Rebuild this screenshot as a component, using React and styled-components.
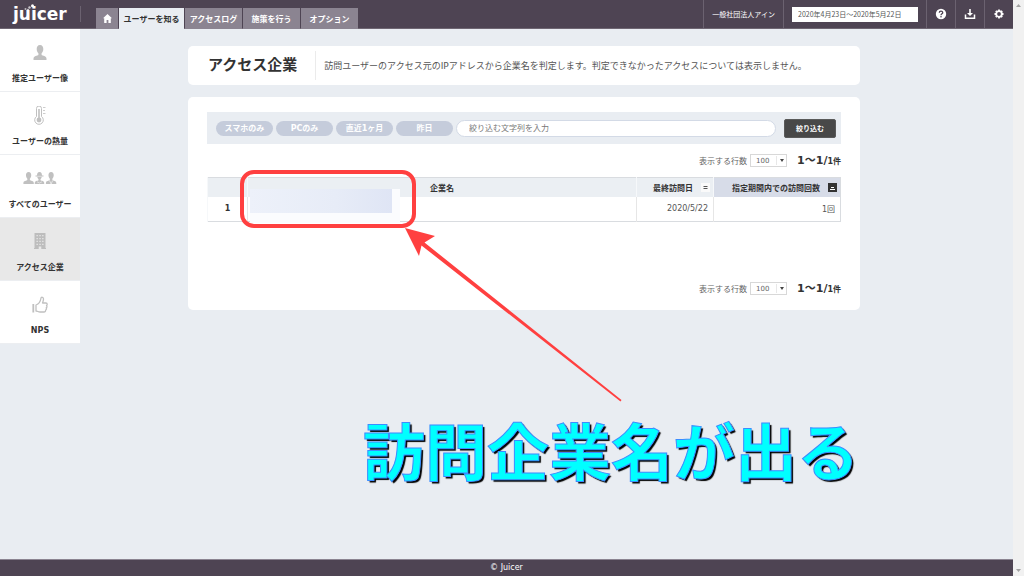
import React from 'react';
import styled, { createGlobalStyle } from 'styled-components';

const GlobalStyle = createGlobalStyle`
  * {
    box-sizing: border-box;
  }
  body {
    margin: 0;
    background: #e9edf2;
    color: #333;
    font-family: 'DejaVu Sans', 'Noto Sans CJK JP', sans-serif;
    font-size: 8px;
  }
  button, input, select {
    font-family: inherit;
    margin: 0;
  }
  a {
    color: inherit;
    text-decoration: none;
  }
`;

const Window = styled.div`
  display: flex;
  min-height: 100vh;
`;

const Page = styled.div`
  flex: 1;
  min-width: 0;
  display: flex;
  flex-direction: column;
`;

const ScrollTrack = styled.div`
  width: 11px;
  background: #f1f1f1;
  display: flex;
  flex-direction: column;
  justify-content: space-between;
  align-items: center;
  padding: 4px 0;

  svg {
    display: block;
    width: 5px;
    height: 3px;
    fill: #a3a3a3;
  }
`;

const Header = styled.header`
  display: flex;
  height: 29px;
  background: #4e4453;
  border-bottom: 1px solid #6e6672;
  color: #fff;
`;

const Logo = styled.a`
  position: relative;
  width: 80px;
  padding-left: 13px;
  font-size: 17px;
  font-weight: bold;
  line-height: 29px;

  svg {
    position: absolute;
    left: 24px;
    top: 4px;
    width: 14px;
    height: 8px;
    fill: #fff;
  }
`;

const LogoRule = styled.span`
  width: 1px;
  height: 16px;
  margin-top: 6px;
  background: #6b6270;
`;

const Nav = styled.nav`
  display: flex;
  align-items: flex-end;
  gap: 1px;
  margin-left: 15px;
  margin-bottom: -1px;
`;

const Tab = styled.a`
  display: flex;
  align-items: center;
  justify-content: center;
  width: ${(p) => p.$width || 57}px;
  height: 21px;
  background: ${(p) => (p.$active ? '#e9edf2' : '#8b8491')};
  color: ${(p) => (p.$active ? '#333' : '#fff')};
  font-weight: bold;
  white-space: nowrap;

  svg {
    display: block;
    width: 9px;
    height: 9px;
    fill: #fff;
  }
`;

const Tools = styled.div`
  display: flex;
  margin-left: auto;
`;

const Tool = styled.div`
  display: flex;
  align-items: center;
  padding: 0 8px;
  border-left: 1px solid #6b6270;
  font-size: 7px;
  white-space: nowrap;
`;

const DateInput = styled.input`
  width: 126px;
  height: 15px;
  padding: 0 6px;
  border: 0;
  background: #fff;
  color: #555;
  font-family: 'Noto Sans CJK JP', sans-serif;
  font-size: 7px;
`;

const ToolButton = styled.button`
  display: flex;
  align-items: center;
  justify-content: center;
  width: 29px;
  padding: 0;
  border: 0;
  border-left: 1px solid #6b6270;
  background: none;

  svg {
    display: block;
    width: 12px;
    height: 12px;
  }
`;

const Body = styled.div`
  display: flex;
  flex: 1;
  align-items: flex-start;
`;

const Sidebar = styled.nav`
  width: 80px;
  flex-shrink: 0;
  background: #fff;
`;

const SideLink = styled.a`
  display: flex;
  flex-direction: column;
  align-items: center;
  height: 63px;
  padding-top: 14px;
  border-bottom: 1px solid #eceef1;
  background: ${(p) => (p.$active ? '#e8e8e8' : '#fff')};
  font-weight: bold;
  line-height: 12px;
  white-space: nowrap;

  svg {
    display: block;
    height: 20px;
    margin-bottom: 10px;
  }
`;

const Main = styled.main`
  flex: 1;
  min-width: 0;
  margin: 17px 153px 0 108px;
`;

const Card = styled.section`
  background: #fff;
  border-radius: 5px;
`;

const TitleCard = styled(Card)`
  display: flex;
  align-items: center;
  height: 39px;
  margin-bottom: 12px;
  padding: 0 20px;
`;

const Title = styled.h1`
  margin: 0;
  padding-right: 18px;
  border-right: 1px solid #ebebeb;
  font-size: 15px;
  line-height: 29px;
  white-space: nowrap;
`;

const Lead = styled.p`
  margin: 0 0 0 8px;
  color: #555;
  font-size: 9px;
`;

const ListCard = styled(Card)`
  padding: 15px 19px;
`;

const Filter = styled.form`
  display: flex;
  align-items: center;
  gap: 3px;
  height: 32px;
  padding: 0 5px 0 9px;
  background: #e9edf2;
`;

const Pill = styled.button`
  width: 57px;
  height: 15px;
  padding: 0;
  border: 0;
  border-radius: 8px;
  background: #c5ccdb;
  color: #fff;
  font-size: 8px;
  font-weight: bold;
  line-height: 15px;
`;

const SearchInput = styled.input`
  flex: 1;
  min-width: 0;
  height: 17px;
  padding: 0 12px;
  border: 1px solid #d3dae6;
  border-radius: 9px;
  background: #fff;
  font-size: 8px;

  &::placeholder {
    color: #777;
    opacity: 1;
  }
`;

const SubmitButton = styled.button`
  width: 52px;
  height: 19px;
  margin-left: 5px;
  padding: 0;
  border: 1px solid #5a5a5a;
  border-radius: 2px;
  background: #484848;
  color: #fff;
  font-size: 7px;
  font-weight: bold;
`;

const PagerRow = styled.div`
  display: flex;
  align-items: center;
  justify-content: flex-end;
  height: 13px;
  margin-top: ${(p) => p.$top}px;
  color: #666;
`;

const SelectBox = styled.span`
  position: relative;
  display: flex;
  margin: 0 10px 0 3px;

  &::after {
    content: '';
    position: absolute;
    right: 3px;
    top: 5px;
    border: 2px solid transparent;
    border-top: 3px solid #444;
    border-bottom: 0;
  }
`;

const Select = styled.select`
  appearance: none;
  width: 37px;
  height: 13px;
  padding: 0 5px;
  border: 1px solid #d8d8d8;
  border-radius: 0;
  background: linear-gradient(#e8e8e8, #e8e8e8) 25px 1px / 1px 9px no-repeat #fff;
  color: #666;
  font-size: 7px;
`;

const Range = styled.strong`
  color: #333;
  font-size: 11px;
  line-height: 13px;

  small {
    font-size: 8px;
  }
`;

const Table = styled.table`
  width: 100%;
  margin-top: 10px;
  border: 1px solid #d9dce0;
  border-collapse: collapse;
  table-layout: fixed;

  th {
    height: 19px;
    padding: 0;
    background: #ebeff3;
    border-left: 1px solid #f6f8fa;
    text-align: center;
  }

  td {
    height: 25px;
    padding: 0 5px;
    border-left: 1px solid #e6e6e6;
    color: #555;
    text-align: right;
  }
`;

const NumberCell = styled.th`
  && {
    height: 25px;
    background: #fff;
  }
`;

const SortHead = styled.th`
  && {
    background: ${(p) => (p.$sorted ? '#d7dce8' : '#ebeff3')};
  }
`;

const SortLabel = styled.span`
  display: flex;
  align-items: center;
  justify-content: flex-end;
  gap: 8px;
  padding-right: 3px;
  white-space: nowrap;
`;

const SortButton = styled.button`
  display: flex;
  padding: 0;
  border: 0;
  background: ${(p) => (p.$sorted ? '#333' : '#fafafa')};
  color: ${(p) => (p.$sorted ? '#fff' : '#555')};

  svg {
    display: block;
    width: 9px;
    height: 9px;
  }
`;

const Footer = styled.footer`
  height: 17px;
  border-top: 1px solid #8b8491;
  background: #4e4453;
  color: #fff;
  line-height: 16px;
  text-align: center;
`;

// notes drawn over the page
const Markup = styled.svg`
  position: absolute;
  left: 0;
  top: 0;
  width: 1024px;
  height: 576px;
  pointer-events: none;
`;

const Caption = styled.p`
  position: absolute;
  left: 363px;
  top: 404px;
  margin: 0;
  color: #00ffff;
  font-family: 'Noto Sans CJK JP', sans-serif;
  font-size: 62px;
  font-weight: bold;
  line-height: 90px;
  white-space: nowrap;
  -webkit-text-stroke: 1px #3c8cff;
  text-shadow: 2px 2px 1px #000;
  pointer-events: none;
`;

const UserShape = () => (
  <path d="M7 0C4.700 0 3.700 1.700 3.700 4C3.700 6 4.500 7.500 5.400 8.300V10C4.500 10.800 0.500 11 0.500 13.500V15H13.500V13.500C13.500 11 9.500 10.800 8.600 10V8.300C9.500 7.500 10.300 6 10.300 4C10.300 1.700 9.300 0 7 0Z" />
);

const UserIcon = () => (
  <svg width="14" viewBox="0 -2 14 20" fill="#c0c0c0"><UserShape /></svg>
);

const ThermoIcon = () => (
  <svg width="14" viewBox="0 1 14 20" fill="none" stroke="#c0c0c0">
    <path d="M3.500 11.500V3.500a2.500 2.500 0 0 1 5 0V11.500a4.300 4.300 0 1 1-5 0Z" />
    <path d="M6 4V13" strokeWidth="1.600" />
    <circle cx="6" cy="15" r="2.400" fill="#c0c0c0" stroke="none" />
    <path d="M10 2.500h2.500M10 5.500h2M10 8.500h2.500" strokeWidth="0.800" />
  </svg>
);

const UsersIcon = () => (
  <svg width="34" viewBox="0 1 34 20" fill="#c0c0c0">
    <g transform="translate(0 4) scale(.8)"><UserShape /></g>
    <path d="M16.500 4c-2 0-2.300 1.500-2.500 3.500h-1.500v1h1.700c.2 1.400.8 2.300 1.300 2.800v1c-1 .6-3.700.7-3.700 2.500v1.200h9.400v-1.200c0-1.800-2.700-1.900-3.700-2.500v-1c.5-.5 1.100-1.400 1.300-2.800h1.700v-1h-1.500c-.2-2-.5-3.500-2.500-3.500Z" />
    <path d="M14.200 8.300h4.600M14 13.800l2.500 1.200l2.500-1.200" fill="none" stroke="#fff" strokeWidth="0.500" />
    <g transform="translate(22.500 4) scale(.8)"><UserShape /></g>
    <path d="M26.500 12.500l1.600 3.500l1.600-3.500" fill="none" stroke="#fff" strokeWidth="0.600" />
  </svg>
);

const BuildingIcon = () => (
  <svg width="12" viewBox="0 1 12 20">
    <path d="M0.500 2h11v15h0.500v1H7.300v-2.500h-2.600V18H0v-1h0.500Z" fill="#bdbdbd" />
    <path d="M2.500 4h1.300v1.300h-1.300zM5.400 4h1.300v1.300h-1.300zM8.200 4h1.300v1.300h-1.300zM2.500 6.900h1.300v1.300h-1.300zM5.400 6.900h1.300v1.300h-1.300zM8.200 6.900h1.300v1.300h-1.300zM2.500 9.800h1.300v1.300h-1.300zM5.400 9.800h1.300v1.300h-1.300zM8.200 9.800h1.300v1.300h-1.300zM2.500 12.700h1.300v1.300h-1.300zM5.400 12.700h1.300v1.300h-1.300zM8.200 12.700h1.300v1.300h-1.300z" fill="#e8e8e8" />
  </svg>
);

const ThumbIcon = () => (
  <svg width="16" viewBox="0 0 16 20" fill="none" stroke="#c0c0c0" strokeWidth="1.300" strokeLinejoin="round">
    <path d="M1.300 9v8.500" strokeWidth="1.800" />
    <path d="M4 10C7 9 8.500 6.500 9 3C9.300 1.800 11.500 2 11.500 4C11.500 5.700 10.800 7 10.500 8H14C15.500 8 15.500 10 14.500 10.500C15.300 11.200 15 12.500 14.200 12.800C14.800 13.700 14.500 14.800 13.600 15.100C13.800 16.300 13 17 12 17H8C6.300 17 5.500 16 4 16Z" />
  </svg>
);

const menu = [
  { label: '推定ユーザー像', icon: <UserIcon /> },
  { label: 'ユーザーの熱量', icon: <ThermoIcon /> },
  { label: 'すべてのユーザー', icon: <UsersIcon /> },
  { label: 'アクセス企業', icon: <BuildingIcon />, active: true },
  { label: 'NPS', icon: <ThumbIcon /> },
];

const filters = ['スマホのみ', 'PCのみ', '直近1ヶ月', '昨日'];

function Pager({ id, top }) {
  return (
    <PagerRow $top={top}>
      <label htmlFor={id}>表示する行数</label>
      <SelectBox>
        <Select id={id} defaultValue="100">
          <option>100</option>
        </Select>
      </SelectBox>
      <Range>1〜1/<small>1件</small></Range>
    </PagerRow>
  );
}

function App() {
  return (
    <Window>
      <GlobalStyle />
      <Page>
        <Header>
          <Logo href="#">
            juicer
            <svg viewBox="0 0 14 8">
              <circle cx="8.500" cy="1.800" r="1.500" />
              <circle cx="5.500" cy="3.500" r="1.200" opacity="0.700" />
              <circle cx="1.500" cy="5" r="1" opacity="0.600" />
              <circle cx="4" cy="6" r="1.200" opacity="0.700" />
            </svg>
          </Logo>
          <LogoRule />
          <Nav>
            <Tab href="#" $width={22} aria-label="ホーム">
              <svg viewBox="0 0 9 9"><path d="M4.500 0L0 4.300H1.200V9H3.600V6H5.400V9H7.800V4.300H9Z" /></svg>
            </Tab>
            <Tab href="#" $width={65} $active>ユーザーを知る</Tab>
            <Tab href="#">アクセスログ</Tab>
            <Tab href="#">施策を行う</Tab>
            <Tab href="#">オプション</Tab>
          </Nav>
          <Tools>
            <Tool>一般社団法人アイン</Tool>
            <Tool>
              <DateInput type="text" aria-label="期間" defaultValue="2020年4月23日〜2020年5月22日" />
            </Tool>
            <ToolButton type="button" aria-label="ヘルプ">
              <svg viewBox="0 0 12 12">
                <circle cx="6" cy="6" r="5.200" fill="#fff" />
                <path d="M4.300 4.800C4.300 2.600 7.700 2.600 7.700 4.700C7.700 5.900 6 5.800 6 7.200" fill="none" stroke="#4e4453" strokeWidth="1.300" />
                <circle cx="6" cy="8.700" r="0.800" fill="#4e4453" />
              </svg>
            </ToolButton>
            <ToolButton type="button" aria-label="ダウンロード">
              <svg viewBox="0 0 12 12" fill="#fff">
                <path d="M5.200 1h1.600v4h2.200L6 8L3 5h2.200Z" />
                <path d="M1.500 6.500V10.300H10.500V6.500" fill="none" stroke="#fff" strokeWidth="1.500" />
              </svg>
            </ToolButton>
            <ToolButton type="button" aria-label="設定">
              <svg viewBox="0 0 12 12" fill="none" stroke="#fff">
                <circle cx="6" cy="6" r="2.800" strokeWidth="1.800" />
                <path d="M6 1.500V3M6 9v1.500M1.500 6H3M9 6h1.500M2.800 2.800l1 1M8.200 8.200l1 1M9.200 2.800l-1 1M3.800 8.200l-1 1" strokeWidth="1.800" />
              </svg>
            </ToolButton>
          </Tools>
        </Header>
        <Body>
          <Sidebar>
            {menu.map((item) => (
              <SideLink href="#" key={item.label} $active={item.active}>
                {item.icon}
                {item.label}
              </SideLink>
            ))}
          </Sidebar>
          <Main>
            <TitleCard>
              <Title>アクセス企業</Title>
              <Lead>訪問ユーザーのアクセス元のIPアドレスから企業名を判定します。判定できなかったアクセスについては表示しません。</Lead>
            </TitleCard>
            <ListCard>
              <Filter>
                {filters.map((f) => <Pill type="button" key={f}>{f}</Pill>)}
                <SearchInput type="text" aria-label="絞り込む文字列" placeholder="絞り込む文字列を入力" />
                <SubmitButton type="submit">絞り込む</SubmitButton>
              </Filter>
              <Pager id="rows-top" top={10} />
              <Table>
                <colgroup>
                  <col style={{ width: 40 }} />
                  <col />
                  <col style={{ width: 77 }} />
                  <col style={{ width: 127 }} />
                </colgroup>
                <thead>
                  <tr>
                    <th aria-label="番号" />
                    <th>企業名</th>
                    <SortHead>
                      <SortLabel>
                        最終訪問日
                        <SortButton type="button" aria-label="並べ替え">
                          <svg viewBox="0 0 9 9"><path d="M2.500 3.500h4M2.500 5.500h4" stroke="currentColor" /></svg>
                        </SortButton>
                      </SortLabel>
                    </SortHead>
                    <SortHead $sorted>
                      <SortLabel>
                        指定期間内での訪問回数
                        <SortButton type="button" aria-label="並べ替え" $sorted>
                          <svg viewBox="0 0 9 9"><path d="M3 4.500h3M2 6.500h5" stroke="currentColor" /></svg>
                        </SortButton>
                      </SortLabel>
                    </SortHead>
                  </tr>
                </thead>
                <tbody>
                  <tr>
                    <NumberCell scope="row">1</NumberCell>
                    <td />
                    <td>2020/5/22</td>
                    <td>1回</td>
                  </tr>
                </tbody>
              </Table>
              <Pager id="rows-bottom" top={60} />
            </ListCard>
          </Main>
        </Body>
        <Footer>© Juicer</Footer>
      </Page>
      <ScrollTrack>
        <svg viewBox="0 0 5 3"><path d="M0 3L2.500 0L5 3Z" /></svg>
        <svg viewBox="0 0 5 3"><path d="M0 0L2.500 3L5 0Z" /></svg>
      </ScrollTrack>
      <Markup viewBox="0 0 1024 576">
        <defs>
          <linearGradient id="mask">
            <stop offset="0" stopColor="#edf1fa" />
            <stop offset="0.600" stopColor="#e7ecf7" />
            <stop offset="1" stopColor="#dfe5f5" />
          </linearGradient>
        </defs>
        <rect x="250" y="189" width="150" height="34" fill="#fbfcfe" />
        <rect x="250" y="189" width="142" height="24" fill="url(#mask)" />
        <rect x="242" y="172" width="172" height="54" rx="12" fill="none" stroke="#ff4040" strokeWidth="4" />
        <path d="M405 228L435 236L424.500 242.500L621.500 400L620.500 401.500L421.500 245.500L419 256Z" fill="#ff4040" />
      </Markup>
      <Caption>訪問企業名が出る</Caption>
    </Window>
  );
}

export default App;
